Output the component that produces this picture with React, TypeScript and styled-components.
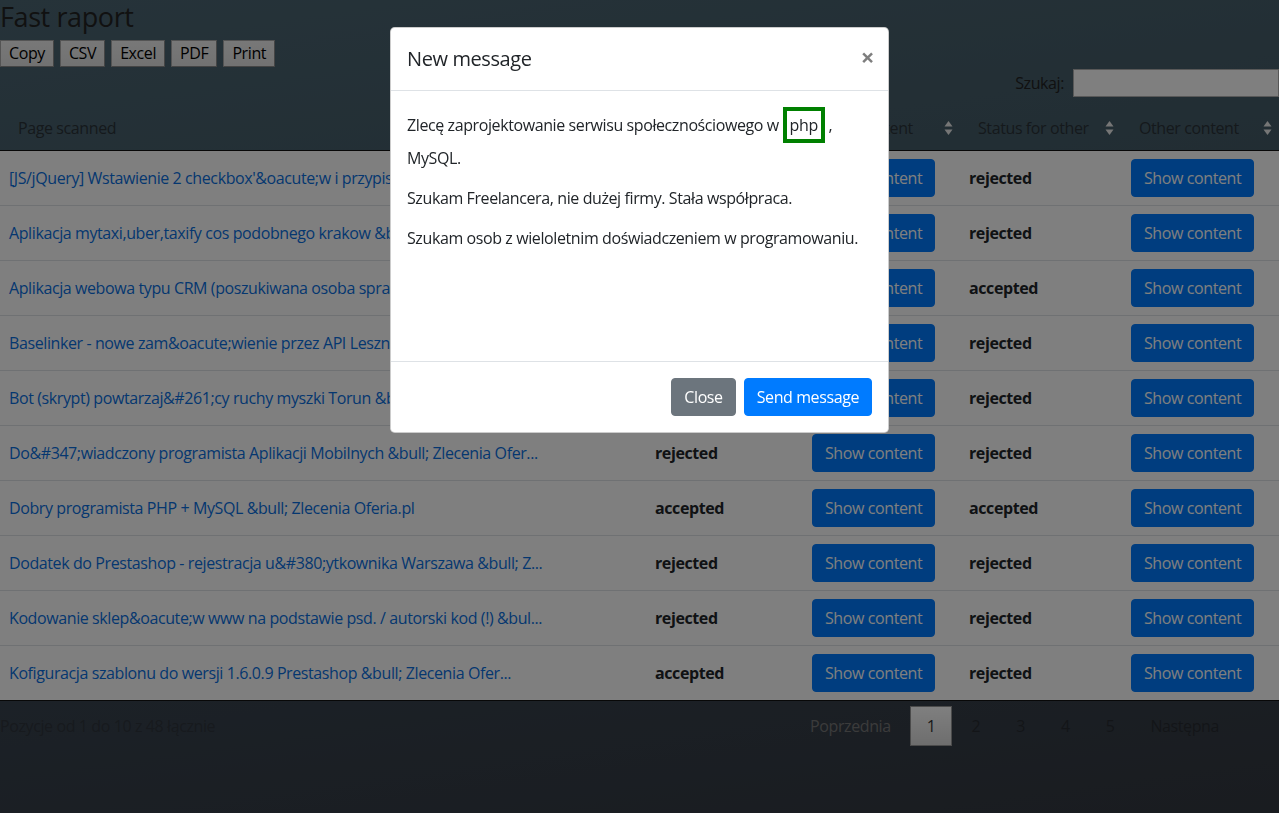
import styled, { createGlobalStyle, css } from "styled-components";

type RowData = {
  title: string;
  status: "accepted" | "rejected";
  otherStatus: "accepted" | "rejected";
};

const rows: RowData[] = [
  {
    title: "[JS/jQuery] Wstawienie 2 checkbox'&oacute;w i przypisanie warto&#347;ci &bull; Zl...",
    status: "accepted",
    otherStatus: "rejected",
  },
  {
    title: "Aplikacja mytaxi,uber,taxify cos podobnego krakow &bull; Zlecenia Ofer...",
    status: "rejected",
    otherStatus: "rejected",
  },
  {
    title: "Aplikacja webowa typu CRM (poszukiwana osoba sprawdzona w...",
    status: "rejected",
    otherStatus: "accepted",
  },
  {
    title: "Baselinker - nowe zam&oacute;wienie przez API Leszno &bull; Zlecenia...",
    status: "rejected",
    otherStatus: "rejected",
  },
  {
    title: "Bot (skrypt) powtarzaj&#261;cy ruchy myszki Torun &bull; Zlecenia O...",
    status: "rejected",
    otherStatus: "rejected",
  },
  {
    title: "Do&#347;wiadczony programista Aplikacji Mobilnych &bull; Zlecenia Ofer...",
    status: "rejected",
    otherStatus: "rejected",
  },
  {
    title: "Dobry programista PHP + MySQL &bull; Zlecenia Oferia.pl",
    status: "accepted",
    otherStatus: "accepted",
  },
  {
    title: "Dodatek do Prestashop - rejestracja u&#380;ytkownika Warszawa &bull; Z...",
    status: "rejected",
    otherStatus: "rejected",
  },
  {
    title: "Kodowanie sklep&oacute;w www na podstawie psd. / autorski kod (!) &bul...",
    status: "rejected",
    otherStatus: "rejected",
  },
  {
    title: "Kofiguracja szablonu do wersji 1.6.0.9 Prestashop &bull; Zlecenia Ofer...",
    status: "accepted",
    otherStatus: "rejected",
  },
];

const columns = [
  { label: "Page scanned", width: 646 },
  { label: "Status for page", width: 156 },
  { label: "Page content", width: 158 },
  { label: "Status for other", width: 161 },
  { label: "Other content", width: 158 },
];

const SortIcon = () => (
  <svg width="9" height="16" viewBox="0 0 9 16">
    <path d="M4.5 1 L8.5 6.5 L0.5 6.5 Z" fill="currentColor" />
    <path d="M4.5 15 L8.5 9.5 L0.5 9.5 Z" fill="currentColor" />
  </svg>
);

const App = () => {
  return (
    <>
      <GlobalStyle />
      <Page>
        <Title>Fast raport</Title>
        <ButtonBar>
          {["Copy", "CSV", "Excel", "PDF", "Print"].map((b) => (
            <ExportButton key={b}>{b}</ExportButton>
          ))}
        </ButtonBar>
        <SearchRow>
          <SearchLabel>Szukaj:</SearchLabel>
          <SearchInput type="search" />
        </SearchRow>
        <Table>
          <colgroup>
            {columns.map((c) => (
              <Col key={c.label} $w={c.width} />
            ))}
          </colgroup>
          <thead>
            <tr>
              {columns.map((c) => (
                <HeadCell key={c.label}>
                  <HeadInner>
                    <span>{c.label}</span>
                    <SortMark>
                      <SortIcon />
                    </SortMark>
                  </HeadInner>
                </HeadCell>
              ))}
            </tr>
          </thead>
          <tbody>
            {rows.map((r, i) => (
              <Row key={i}>
                <Cell>
                  <TitleLink href="#">{r.title}</TitleLink>
                </Cell>
                <Cell>
                  <Status>{r.status}</Status>
                </Cell>
                <Cell>
                  <PrimaryButton>Show content</PrimaryButton>
                </Cell>
                <Cell>
                  <Status>{r.otherStatus}</Status>
                </Cell>
                <Cell>
                  <PrimaryButton>Show content</PrimaryButton>
                </Cell>
              </Row>
            ))}
          </tbody>
        </Table>
        <TableFooter>
          <Info>Pozycje od 1 do 10 z 48 łącznie</Info>
          <Pager>
            <PageButton $disabled>Poprzednia</PageButton>
            <PageButton $current>1</PageButton>
            <PageButton>2</PageButton>
            <PageButton>3</PageButton>
            <PageButton>4</PageButton>
            <PageButton>5</PageButton>
            <PageButton>Następna</PageButton>
          </Pager>
        </TableFooter>
      </Page>

      <Backdrop />
      <ModalLayer>
        <Dialog>
          <ModalHeader>
            <ModalTitle>New message</ModalTitle>
            <CloseX aria-label="Close">×</CloseX>
          </ModalHeader>
          <ModalBody>
            <Para>
              Zlecę zaprojektowanie serwisu społecznościowego w <Keyword>php</Keyword> ,
              MySQL.
            </Para>
            <Para>Szukam Freelancera, nie dużej firmy. Stała współpraca.</Para>
            <Para>Szukam osob z wieloletnim doświadczeniem w programowaniu.</Para>
          </ModalBody>
          <ModalFooter>
            <FooterButton $variant="secondary">Close</FooterButton>
            <FooterButton $variant="primary">Send message</FooterButton>
          </ModalFooter>
        </Dialog>
      </ModalLayer>
    </>
  );
};

export default App;

const GlobalStyle = createGlobalStyle`
  *, *::before, *::after {
    box-sizing: border-box;
  }

  html, body {
    margin: 0;
    padding: 0;
  }

  body {
    min-height: 100vh;
    font-family: "Segoe UI", "Open Sans", "Noto Sans", sans-serif;
    font-size: 16px;
    line-height: 1.5;
    letter-spacing: -0.4px;
    color: #212529;
    background: linear-gradient(172deg, #4c6673 0%, #435a66 35%, #38434f 70%, #333840 100%);
  }

  button, input {
    letter-spacing: inherit;
  }
`;

const Page = styled.div`
  min-height: 100vh;
`;

const Title = styled.h1`
  margin: 0 0 6px;
  font-size: 27px;
  line-height: 34px;
  font-weight: 400;
  color: #222;
`;

const ButtonBar = styled.div`
  display: flex;
  gap: 6px;
`;

const ExportButton = styled.button`
  height: 27px;
  padding: 0 8px;
  font-family: inherit;
  font-size: 16px;
  line-height: 25px;
  color: #000;
  background: linear-gradient(#f0f0f0, #e4e4e4);
  border: 1px solid #a8a8a8;
  border-right-color: #8a8a8a;
  border-bottom-color: #8a8a8a;
  border-radius: 0;
`;

const SearchRow = styled.div`
  display: flex;
  justify-content: flex-end;
  align-items: center;
  margin-top: 2px;
`;

const SearchLabel = styled.label`
  margin-right: 9px;
  color: #222;
`;

const SearchInput = styled.input`
  width: 206px;
  height: 28px;
  border: 1px solid #b0b0b0;
  background: #fff;
`;

const Table = styled.table`
  width: 100%;
  margin-top: 9px;
  border-collapse: collapse;
  table-layout: fixed;
  border-bottom: 1px solid #111;
`;

const Col = styled.col<{ $w: number }>`
  width: ${({ $w }) => $w}px;
`;

const HeadCell = styled.th`
  padding: 10px 7px 10px 18px;
  text-align: left;
  font-weight: 400;
  color: #2a3238;
  border-bottom: 1px solid #111;
`;

const HeadInner = styled.div`
  display: flex;
  justify-content: space-between;
  align-items: center;
  white-space: nowrap;
`;

const SortMark = styled.span`
  display: flex;
  color: #ececec;
`;

const Row = styled.tr`
  background: #fff;

  & + & td {
    border-top: 1px solid #dee2e6;
  }
`;

const Cell = styled.td`
  padding: 8px 10px 8px 9px;
  vertical-align: middle;
  white-space: nowrap;
  overflow: hidden;
`;

const TitleLink = styled.a`
  color: #0a6fe0;
  text-decoration: none;
`;

const Status = styled.b`
  font-weight: 700;
  color: #212529;
`;

const PrimaryButton = styled.button`
  margin-left: 1px;
  padding: 6px 12px;
  font-family: inherit;
  font-size: 16px;
  line-height: 24px;
  color: #fff;
  background: #007bff;
  border: 1px solid #007bff;
  border-radius: 4px;
`;

const TableFooter = styled.div`
  display: flex;
  justify-content: space-between;
  align-items: flex-start;
  padding-top: 5px;
`;

const Info = styled.div`
  padding-top: 8px;
  color: #2e343c;
`;

const Pager = styled.div`
  display: flex;
  gap: 2px;
  padding-right: 43px;
`;

const PageButton = styled.span<{ $current?: boolean; $disabled?: boolean }>`
  min-width: 24px;
  padding: 8px 16px;
  line-height: 22px;
  text-align: center;
  border: 1px solid transparent;
  color: #272b31;

  ${({ $disabled }) =>
    $disabled &&
    css`
      color: #777;
    `}

  ${({ $current }) =>
    $current &&
    css`
      color: #333;
      border-color: #979797;
      background: linear-gradient(#fff, #dcdcdc);
    `}
`;

const Backdrop = styled.div`
  position: fixed;
  inset: 0;
  background: rgba(0, 0, 0, 0.5);
`;

const ModalLayer = styled.div`
  position: fixed;
  inset: 0;
  display: flex;
  justify-content: center;
  align-items: flex-start;
  padding-top: 27px;
`;

const Dialog = styled.div`
  width: 499px;
  display: flex;
  flex-direction: column;
  background: #fff;
  border: 1px solid rgba(0, 0, 0, 0.2);
  border-radius: 4.8px;
`;

const ModalHeader = styled.div`
  display: flex;
  align-items: flex-start;
  justify-content: space-between;
  padding: 16px;
  border-bottom: 1px solid #dee2e6;
`;

const ModalTitle = styled.h5`
  margin: 0;
  font-size: 20px;
  line-height: 30px;
  font-weight: 400;
  color: #212529;
`;

const CloseX = styled.button`
  margin: -16px -18px -16px auto;
  padding: 17px 16px 16px;
  font-family: inherit;
  font-size: 24px;
  font-weight: 700;
  line-height: 1;
  color: #000;
  text-shadow: 0 1px 0 #fff;
  opacity: 0.5;
  background: transparent;
  border: 0;
`;

const ModalBody = styled.div`
  min-height: 270px;
  padding: 16px;
`;

const Para = styled.p`
  margin: 0 0 16px;
`;

const Keyword = styled.span`
  display: inline-block;
  margin-bottom: 3px;
  padding: 2px 3px;
  line-height: 24px;
  border: 4px solid #008000;
`;

const ModalFooter = styled.div`
  display: flex;
  justify-content: flex-end;
  align-items: center;
  padding: 12px;
  border-top: 1px solid #dee2e6;
`;

const FooterButton = styled.button<{ $variant: "primary" | "secondary" }>`
  margin: 4px;
  padding: 6px 12px;
  font-family: inherit;
  font-size: 16px;
  line-height: 24px;
  color: #fff;
  border-radius: 4px;
  border: 1px solid;
  background: ${({ $variant }) => ($variant === "primary" ? "#007bff" : "#6c757d")};
  border-color: ${({ $variant }) => ($variant === "primary" ? "#007bff" : "#6c757d")};
`;
